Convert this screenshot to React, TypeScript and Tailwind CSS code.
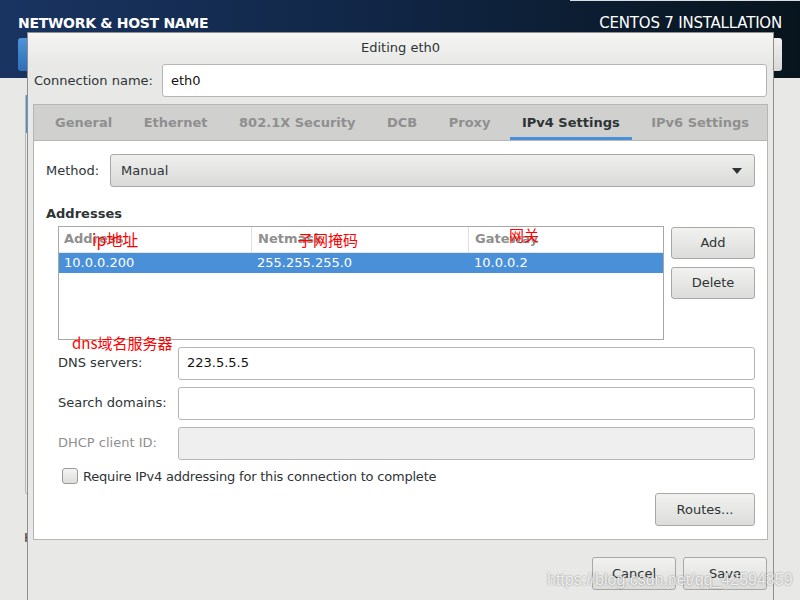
import type { ReactNode } from 'react';

const FONT = "font-['DejaVu_Sans',sans-serif]";
const RED = "font-['Noto_Sans_CJK_SC',sans-serif] text-[#ff0000]";

function GtkButton({ children, className = '' }: { children: ReactNode; className?: string }) {
  return (
    <div
      className={`flex items-center justify-center rounded-[3px] border border-[#a8a8a6] bg-gradient-to-b from-[#f2f2f1] to-[#dcdcda] text-[13px] text-[#2e3436] ${className}`}
    >
      {children}
    </div>
  );
}

function Entry({ value, disabled = false }: { value?: string; disabled?: boolean }) {
  return (
    <div
      className={`flex h-[33px] flex-1 items-center rounded-[3px] border border-[#b6b6b3] px-[8px] text-[13px] text-[#111] ${
        disabled ? 'bg-[#efefef]' : 'bg-white'
      }`}
    >
      {value}
    </div>
  );
}

const tabs = ['General', 'Ethernet', '802.1X Security', 'DCB', 'Proxy', 'IPv4 Settings', 'IPv6 Settings'];

export default function App() {
  return (
    <div className={`relative h-[600px] w-[800px] overflow-hidden bg-[#e8e8e7] ${FONT}`}>
      {/* installer background */}
      <div className="relative h-[78px] bg-gradient-to-r from-[#193461] via-[#102544] to-[#08141d]">
        <div className="absolute right-0 top-0 h-px w-[230px] bg-[#d8dde3]" />
        <div className="flex items-center justify-between px-[18px] pt-[12px] text-white">
          <span className="text-[14px] font-bold tracking-[-0.3px]">NETWORK &amp; HOST NAME</span>
          <span className="text-[15px] tracking-[-0.2px]">CENTOS 7 INSTALLATION</span>
        </div>
        <div className="mt-[3px] flex justify-between px-[18px]">
          <div className="h-[33px] w-[70px] rounded-[3px] bg-gradient-to-b from-[#4f93d8] to-[#2f6fb8]" />
          <div className="h-[33px] w-[70px] rounded-[3px] bg-gradient-to-b from-[#f0f0ef] to-[#d8d8d6]" />
        </div>
      </div>
      <div className="ml-[25px] mt-[17px] h-[400px] w-[300px] rounded-b-[4px] border-l border-b border-[#b9b9b7]">
        <div className="h-[38px] w-[3px] bg-[#4a90d9]" />
      </div>
      <div className="ml-[24px] mt-[33px] text-[13px] text-[#2e3436]">H</div>

      {/* dialog */}
      <div className="absolute left-[27px] top-[32px] flex h-[570px] w-[747px] flex-col border border-[#8f8f8d] bg-[#e8e8e7] text-[#2e3436]">
        <div className="flex h-[30px] items-center justify-center bg-gradient-to-b from-[#f5f5f4] to-[#e8e8e7] text-[13px]">
          Editing eth0
        </div>
        <div className="mt-[1px] flex items-center pl-[6px] pr-[6px]">
          <span className="w-[128px] text-[13px]">Connection name:</span>
          <Entry value="eth0" />
        </div>

        {/* notebook */}
        <div className="mx-[5px] mt-[7px] flex h-[436px] flex-col border border-[#b6b6b3] bg-white">
          <div className="flex h-[36px] shrink-0 items-stretch gap-[7.5px] border-b border-[#b6b6b3] bg-[#d0d0cf] pl-[9px]">
            {tabs.map((t) => (
              <div
                key={t}
                className={`flex items-center whitespace-nowrap border-b-[3px] px-[12px] pt-[3px] text-[13px] font-bold ${
                  t === 'IPv4 Settings'
                    ? 'border-[#4a90d9] text-[#2e3436]'
                    : 'border-transparent text-[#8f8f8f]'
                }`}
              >
                {t}
              </div>
            ))}
          </div>

          <div className="flex flex-1 flex-col px-[12px] pt-[13px]">
            <div className="flex items-center">
              <span className="w-[64px] text-[13px]">Method:</span>
              <div className="flex h-[33px] flex-1 items-center justify-between rounded-[3px] border border-[#a8a8a6] bg-gradient-to-b from-[#efefee] to-[#dadad8] pl-[10px] pr-[12px] text-[13px]">
                <span>Manual</span>
                <svg width="10" height="6" viewBox="0 0 10 6">
                  <path d="M0 0h10L5 6z" fill="#2e3436" />
                </svg>
              </div>
            </div>

            <div className="mt-[17px] text-[13px] font-bold">Addresses</div>

            <div className="relative mt-[2px] flex gap-[7px] pl-[12px]">
              <div className="flex h-[114px] flex-1 flex-col border border-[#a8a8a6]">
                <div className="grid h-[26px] grid-cols-[193px_217px_1fr] border-b border-[#e6e6e6] text-[13px] font-bold text-[#8f8f8f]">
                  <div className="flex items-center border-r border-[#e0e0e0] pl-[5px]">Address</div>
                  <div className="flex items-center border-r border-[#e0e0e0] pl-[6px]">Netmask</div>
                  <div className="flex items-center pl-[6px]">Gateway</div>
                </div>
                <div className="grid h-[20px] grid-cols-[193px_217px_1fr] bg-[#4a90d9] text-[13px] text-white">
                  <div className="flex items-center pl-[5px]">10.0.0.200</div>
                  <div className="flex items-center pl-[5px]">255.255.255.0</div>
                  <div className="flex items-center pl-[5px]">10.0.0.2</div>
                </div>
              </div>
              <div className="flex w-[84px] flex-col gap-[8px] pt-[1px]">
                <GtkButton className="h-[32px]">Add</GtkButton>
                <GtkButton className="h-[32px]">Delete</GtkButton>
              </div>
              <span className={`absolute left-[46px] top-[3px] text-[16px] leading-[20px] ${RED}`}>ip地址</span>
              <span className={`absolute left-[252px] top-[4px] text-[15px] leading-[20px] ${RED}`}>子网掩码</span>
              <span className={`absolute left-[463px] top-[-1px] text-[15px] leading-[20px] ${RED}`}>网关</span>
              <span className={`absolute left-[26px] top-[107px] text-[15px] leading-[20px] ${RED}`}>dns域名服务器</span>
            </div>

            <div className="mt-[7px] flex flex-col gap-[7px] pl-[12px]">
              <div className="flex items-center">
                <span className="w-[120px] text-[13px]">DNS servers:</span>
                <Entry value="223.5.5.5" />
              </div>
              <div className="flex items-center">
                <span className="w-[120px] text-[13px]">Search domains:</span>
                <Entry />
              </div>
              <div className="flex items-center">
                <span className="w-[120px] text-[13px] text-[#8f8f8f]">DHCP client ID:</span>
                <Entry disabled />
              </div>
            </div>

            <div className="mt-[7px] flex items-center gap-[5px] pl-[16px]">
              <div className="h-[16px] w-[16px] rounded-[3px] border border-[#9a9a98] bg-gradient-to-b from-[#f4f4f3] to-[#dededc]" />
              <span className="text-[13px] tracking-[-0.2px]">Require IPv4 addressing for this connection to complete</span>
            </div>

            <div className="mt-[7px] flex justify-end">
              <GtkButton className="h-[33px] w-[100px]">Routes...</GtkButton>
            </div>
          </div>
        </div>

        <div className="mt-[17px] flex justify-end gap-[7px] pr-[6px]">
          <GtkButton className="h-[33px] w-[84px]">Cancel</GtkButton>
          <GtkButton className="h-[33px] w-[84px]">Save</GtkButton>
        </div>
      </div>

      {/* watermark */}
      <span className="absolute left-[547px] top-[568px] font-['Liberation_Sans',sans-serif] text-[16px] text-white/80 [text-shadow:0_0_2px_rgba(0,0,0,0.45)]">
        https://blog.csdn.net/qq_42594359
      </span>
    </div>
  );
}
